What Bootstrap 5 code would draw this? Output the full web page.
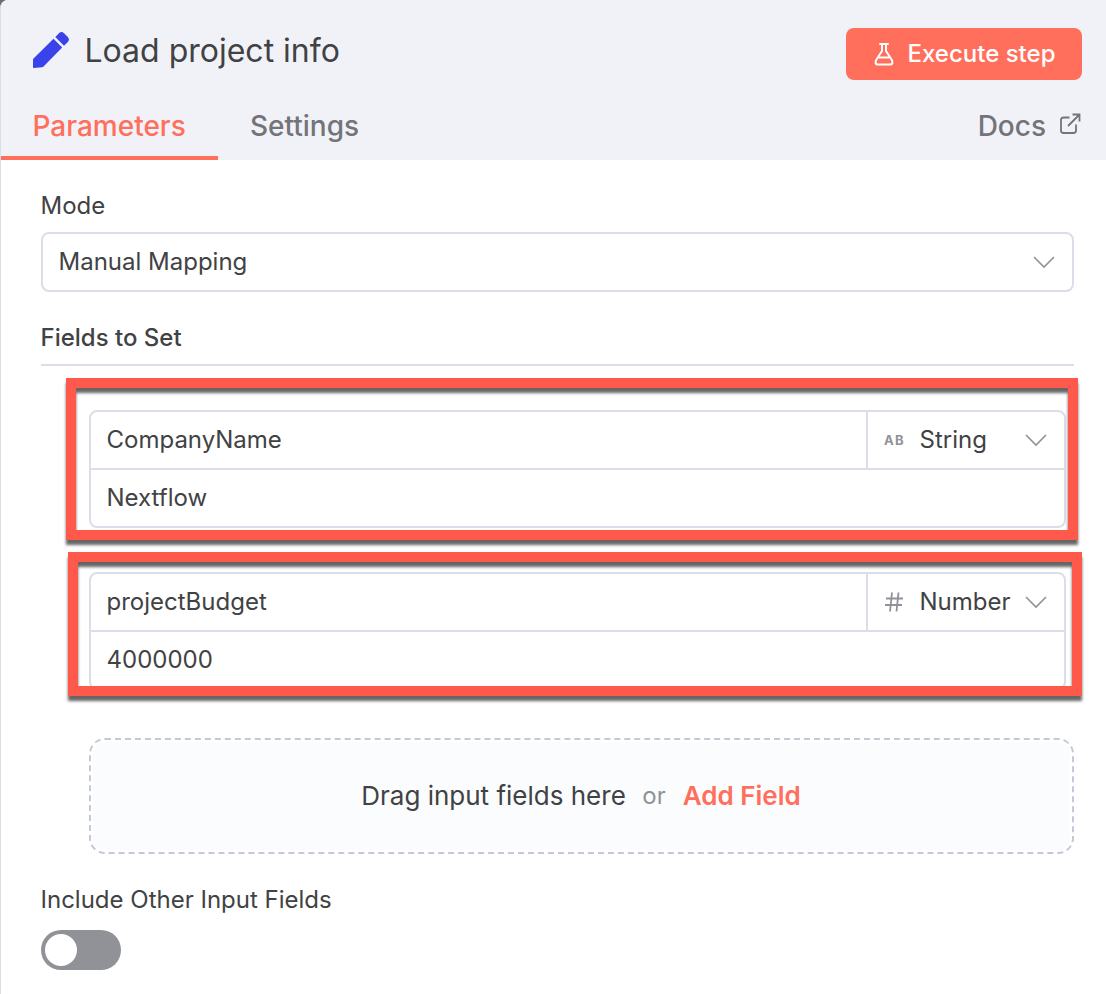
<!DOCTYPE html>
<html lang="en">
<head>
<meta charset="utf-8">
<meta name="viewport" content="width=device-width, initial-scale=1">
<title>Load project info</title>
<link href="https://cdn.jsdelivr.net/npm/bootstrap@5.3.0/dist/css/bootstrap.min.css" rel="stylesheet">
<style>
  :root { --coral: #ff6f5c; --line: #dbdee9; --ink: #414244; --muted: #909298; --tab: #737479; }
  body { font-family: Inter, "Liberation Sans", sans-serif; font-size: 24px; line-height: 32px; color: var(--ink); background: #6b6a75; overflow: hidden; }
  .panel { height: 994px; background: #fff; border-left: 1px solid var(--line); border-top-left-radius: 8px; overflow: hidden; }
  .panel-head { height: 160px; background: #f1f2f8; }
  .title-row { height: 104px; padding: 28px 24px 0 32px; }
  .pencil { margin-top: 4px; }
  .node-title { font-size: 32px; line-height: 44px; font-weight: 400; margin: 1px 0 0 15.500px; }
  .btn-run { width: 236px; height: 52px; border: 0; border-radius: 8px; background: var(--coral); color: #fff; font-size: 24px; font-weight: 500; line-height: 52px; padding: 0 0 0 1px; }
  .btn-run:hover { background: #f3634f; color: #fff; }
  .run-label { margin-left: 14px; }
  .tabs { height: 56px; font-size: 28px; font-weight: 500; line-height: 44px; }
  .tabs .nav-link { height: 56px; padding: 0; color: var(--tab); }
  .tabs .nav-link.active { width: 217px; padding-left: 31.500px; color: var(--coral); border-bottom: 4px solid var(--coral); }
  .tabs .tab-two { margin-left: 32px; }
  .tabs .docs { margin-right: 25px; gap: 13px; }
  .docs svg { margin-top: 9px; }
  .panel-body { padding: 30px 32px 0 40px; }
  .txt { margin-left: -.5px; }
  .box { border: 2px solid var(--line); border-radius: 8px; }
  .mode-box { height: 60px; margin-top: 10px; padding: 0 17px 0 16px; }
  .set-title { margin-top: 30px; height: 44px; font-weight: 500; border-bottom: 2px solid var(--line); }
  .assignments { padding: 44px 8px 0 48px; }
  .assignment { position: relative; height: 118px; }
  .assignment + .assignment { margin-top: 44px; }
  .assignment .name-row { height: 58px; border-bottom: 2px solid var(--line); }
  .assignment .value-row { height: 56px; }
  .assignment .cell { padding-left: 15.500px; }
  .type-cell { width: 198px; border-left: 2px solid var(--line); padding: 0 17px 0 15px; }
  .type-cell .glyph { width: 22px; margin-right: 14.500px; }
  .type-cell .ab { font-size: 13px; line-height: 14px; font-weight: 700; letter-spacing: 1.400px; color: var(--muted); padding-left: 1px; }
  .mark-box { position: absolute; border: 10px solid #ff594b; filter: drop-shadow(0 5px 1.500px rgba(0,0,0,.6)); pointer-events: none; }
  .mark-a { left: -25px; top: -34px; width: 1012px; height: 162px; }
  .mark-b { left: -23px; top: -22px; width: 1014px; height: 144px; }
  .drop-zone { margin: 48px 0 0 48px; height: 116px; border: 2px dashed #c5c8d8; border-radius: 16px; padding: 2px; }
  .drop-inner { background: #fbfcfe; border-radius: 12px; }
  .drag { font-size: 26px; }
  .or { color: var(--muted); margin: 0 17px 0 16.500px; }
  .add { font-size: 26px; font-weight: 600; color: var(--coral); text-decoration: none; margin-right: 1px; }
  .include { margin-top: 30px; }
  .toggle { width: 80px; height: 40px; margin-top: 14px; border-radius: 20px; background: #909298; padding: 4px; }
  .knob { width: 32px; height: 32px; border-radius: 50%; background: #fff; }
  svg { display: block; flex: none; }
</style>
</head>
<body>
<main class="panel">
  <header class="panel-head">
    <div class="title-row d-flex align-items-start">
      <svg class="pencil" width="36" height="36" viewBox="0 0 36 36" fill="#3a42e9"><path d="M20.500 6.800 29.200 15.500 10.800 34.200Q10 35 9 35.300L.5 36Q0 36 0 35.300V27.500Q.2 26.700 1 26.100Z"/><path d="M22.300 5 26 1.300Q28.500-1 31 1.200L34.600 4.800Q37.200 7.500 34.800 10L31 13.800Z"/></svg>
      <h1 class="node-title">Load project info</h1>
      <button class="btn btn-run ms-auto d-flex align-items-center justify-content-center" type="button">
        <svg width="20" height="24" viewBox="0 0 20 24" fill="none" stroke="#fff" stroke-width="2" stroke-linecap="round" stroke-linejoin="round"><path d="M6 2h8M8 2v7L2 18.300Q.5 22.500 4 22.500h12Q19.500 22.500 18 18.300L12 9V2M4.500 15.500h11"/></svg>
        <span class="run-label">Execute step</span>
      </button>
    </div>
    <nav class="tabs nav flex-nowrap">
      <a class="nav-link active" href="#">Parameters</a>
      <a class="nav-link tab-two" href="#">Settings</a>
      <a class="nav-link docs ms-auto d-flex" href="#">Docs
        <svg width="22" height="22" viewBox="0 0 22 22" fill="none" stroke="#737479" stroke-width="1.800"><path d="M10.500 4.500H4.500Q2 4.500 2 7v10.500Q2 20 4.500 20h10Q17 20 17 17.500V11.500M9 13 20 2M13.500 1.500h7v7"/></svg></a>
    </nav>
  </header>

  <section class="panel-body">
    <div class="txt">Mode</div>
    <div class="box mode-box d-flex align-items-center justify-content-between">
      <span class="txt">Manual Mapping</span>
      <svg width="22" height="14" viewBox="0 0 22 14" fill="none" stroke="#909298" stroke-width="1.600"><path d="M1 2 11 12 21 2"/></svg>
    </div>
    <div class="set-title"><div class="txt">Fields to Set</div></div>

    <div class="assignments">
      <div class="assignment box">
        <div class="name-row d-flex">
          <div class="cell flex-grow-1 d-flex align-items-center">CompanyName</div>
          <div class="type-cell d-flex align-items-center">
            <span class="glyph ab">AB</span>
            <span>String</span>
            <svg class="ms-auto" width="22" height="14" viewBox="0 0 22 14" fill="none" stroke="#909298" stroke-width="1.600"><path d="M1 2 11 12 21 2"/></svg>
          </div>
        </div>
        <div class="cell value-row d-flex align-items-center">Nextflow</div>
        <div class="mark-box mark-a"></div>
      </div>
      <div class="assignment box">
        <div class="name-row d-flex">
          <div class="cell flex-grow-1 d-flex align-items-center">projectBudget</div>
          <div class="type-cell d-flex align-items-center">
            <svg class="glyph" width="22" height="22" viewBox="0 0 22 22" fill="none" stroke="#909298" stroke-width="1.800"><path d="M3 7.500h17M2 14h17M9 1.500 7 20.500M15.500 1.500l-2 19"/></svg>
            <span>Number</span>
            <svg class="ms-auto" width="22" height="14" viewBox="0 0 22 14" fill="none" stroke="#909298" stroke-width="1.600"><path d="M1 2 11 12 21 2"/></svg>
          </div>
        </div>
        <div class="cell value-row d-flex align-items-center">4000000</div>
        <div class="mark-box mark-b"></div>
      </div>
    </div>

    <div class="drop-zone">
      <div class="drop-inner h-100 d-flex align-items-center justify-content-center">
        <span class="drag">Drag input fields here</span><span class="or">or</span><a class="add" href="#">Add Field</a>
      </div>
    </div>

    <div class="include txt">Include Other Input Fields</div>
    <div class="toggle"><div class="knob"></div></div>
  </section>
</main>
<script src="https://cdn.jsdelivr.net/npm/bootstrap@5.3.0/dist/js/bootstrap.bundle.min.js"></script>
</body>
</html>
